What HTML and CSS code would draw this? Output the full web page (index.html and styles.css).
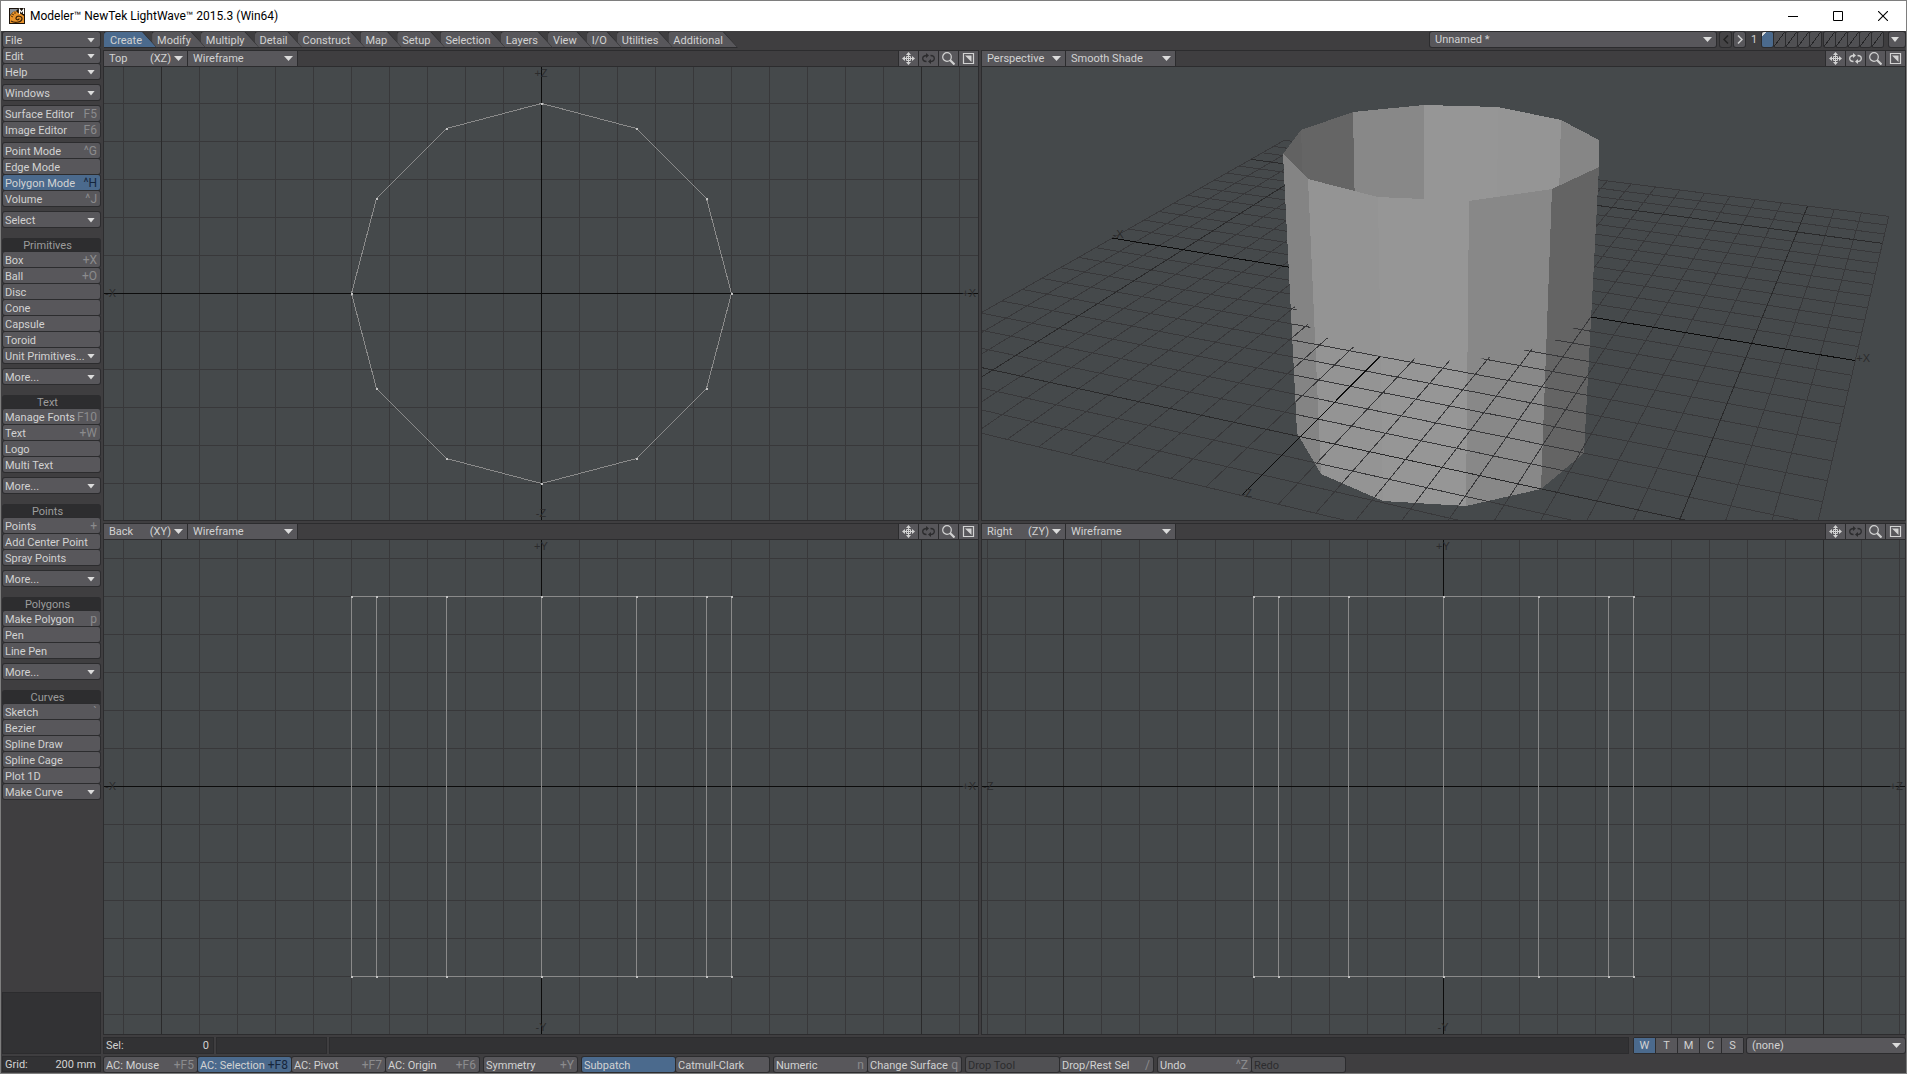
FILE: index.html
```html
<!DOCTYPE html>
<html lang="en">
<head>
<meta charset="utf-8">
<title>Modeler™ NewTek LightWave™ 2015.3 (Win64)</title>
<link rel="stylesheet" href="styles.css">
</head>
<body>
<svg class="defs" aria-hidden="true">
  <symbol id="i-move" viewBox="0 0 13 13"><path d="M6.500 2v9M2 6.500h9M4.500 4.500h4v4h-4z" fill="none" stroke="currentColor"/><path d="M6.500 0L9 3H4zM6.500 13L4 10h5zM0 6.500L3 4v5zM13 6.500L10 9V4z" fill="currentColor"/></symbol>
  <symbol id="i-rotate" viewBox="0 0 13 13"><path d="M4.500 9.500C2 9.500 .7 8 .7 6.500S2 3.500 5 3.500M8.500 3.500c2.500 0 3.800 1.500 3.800 3S11 9.500 8 9.500" fill="none" stroke="currentColor" stroke-width="1.300"/><path d="M4 1l3 2.500L4 6zM9 7L6 9.500 9 12z" fill="currentColor"/></symbol>
  <symbol id="i-zoom" viewBox="0 0 13 13"><circle cx="5" cy="5" r="4.300" fill="none" stroke="currentColor" stroke-width="1.200"/><path d="M8 8l4.500 4.500" stroke="currentColor" stroke-width="2.200"/></symbol>
  <symbol id="i-max" viewBox="0 0 13 13"><path d="M1.500 1.500h10v10h-10z" fill="none" stroke="currentColor" stroke-width="1.200"/><path d="M3 3.500h6.500v6.500z" fill="currentColor"/></symbol>
</svg>
<div class="window">
  <header class="titlebar">
    <svg class="app-icon" viewBox="0 0 16 16" aria-hidden="true">
      <rect width="16" height="16" fill="#1a120a"/>
      <path d="M1 1h8l-2 2-3 1-3 3z" fill="#8a8f94"/>
      <path d="M1 8l3-4 3-1 2 2 3 1 3 2v7H1z" fill="#e8922a"/>
      <path d="M2 13c3 2 10 2 11-2 .5-3-5-4-6-1-.5 2 3 2.500 3 .5" fill="none" stroke="#3a2208" stroke-width="1.200"/>
      <path d="M2 8l2 1M3 6l2 1M6 4l0 2" stroke="#5a3208"/>
      <path d="M10.500 6V1.500l2 2.500 2-2.500V6" fill="none" stroke="#fff" stroke-width="1.200"/>
    </svg>
    <h1 class="title">Modeler™ NewTek LightWave™ 2015.3 (Win64)</h1>
    <div class="caption">
      <button aria-label="Minimize"><svg viewBox="0 0 10 10"><path d="M0 5.500h10" stroke="#000"/></svg></button>
      <button aria-label="Maximize"><svg viewBox="0 0 10 10"><path d="M.5.5h9v9h-9z" fill="none" stroke="#000"/></svg></button>
      <button aria-label="Close"><svg viewBox="0 0 10 10"><path d="M0 0l10 10M10 0L0 10" stroke="#000" stroke-width="1.100"/></svg></button>
    </div>
  </header>

  <div class="workspace">
    <nav class="sidebar">
      <div class="group"><button class="btn menu">File</button><button class="btn menu">Edit</button><button class="btn menu">Help</button></div>
      <div class="group"><button class="btn menu">Windows</button></div>
      <div class="group"><button class="btn">Surface Editor<kbd>F5</kbd></button><button class="btn">Image Editor<kbd>F6</kbd></button></div>
      <div class="group"><button class="btn">Point Mode<kbd>^G</kbd></button><button class="btn">Edge Mode</button><button class="btn on">Polygon Mode<kbd>^H</kbd></button><button class="btn">Volume<kbd>^J</kbd></button></div>
      <div class="group"><button class="btn menu">Select</button></div>

      <h2 class="heading">Primitives</h2>
      <div class="group"><button class="btn">Box<kbd>+X</kbd></button><button class="btn">Ball<kbd>+O</kbd></button><button class="btn">Disc</button><button class="btn">Cone</button><button class="btn">Capsule</button><button class="btn">Toroid</button><button class="btn menu">Unit Primitives...</button></div>
      <div class="group"><button class="btn menu">More...</button></div>

      <h2 class="heading">Text</h2>
      <div class="group"><button class="btn">Manage Fonts<kbd>F10</kbd></button><button class="btn">Text<kbd>+W</kbd></button><button class="btn">Logo</button><button class="btn">Multi Text</button></div>
      <div class="group"><button class="btn menu">More...</button></div>

      <h2 class="heading">Points</h2>
      <div class="group"><button class="btn">Points<kbd>+</kbd></button><button class="btn">Add Center Point</button><button class="btn">Spray Points</button></div>
      <div class="group"><button class="btn menu">More...</button></div>

      <h2 class="heading">Polygons</h2>
      <div class="group"><button class="btn">Make Polygon<kbd>p</kbd></button><button class="btn">Pen</button><button class="btn">Line Pen</button></div>
      <div class="group"><button class="btn menu">More...</button></div>

      <h2 class="heading">Curves</h2>
      <div class="group"><button class="btn">Sketch<kbd>`</kbd></button><button class="btn">Bezier</button><button class="btn">Spline Draw</button><button class="btn">Spline Cage</button><button class="btn">Plot 1D</button><button class="btn menu">Make Curve</button></div>

      <div class="info"></div>
      <div class="readout grid-size"><span>Grid:</span><span>200 mm</span></div>
    </nav>

    <main class="main">
      <div class="topbar">
        <div class="tabs">
          <button class="tab on">Create</button><button class="tab">Modify</button><button class="tab">Multiply</button><button class="tab">Detail</button><button class="tab">Construct</button><button class="tab">Map</button><button class="tab">Setup</button><button class="tab">Selection</button><button class="tab">Layers</button><button class="tab">View</button><button class="tab">I/O</button><button class="tab">Utilities</button><button class="tab">Additional</button>
        </div>
        <div class="layers">
          <label class="drop object"><select aria-label="Object"><option>Unnamed *</option></select></label>
          <button class="step" aria-label="Previous layer set" disabled><svg viewBox="0 0 6 9"><path d="M5 .5l-4 4 4 4" fill="none" stroke="currentColor" stroke-width="1.500"/></svg></button>
          <button class="step" aria-label="Next layer set"><svg viewBox="0 0 6 9"><path d="M1 .5l4 4-4 4" fill="none" stroke="currentColor" stroke-width="1.500"/></svg></button>
          <span class="set">1</span>
          <div class="bank"><button class="layer on" aria-label="Layer 1"></button><button class="layer" aria-label="Layer 2"></button><button class="layer" aria-label="Layer 3"></button><button class="layer" aria-label="Layer 4"></button><button class="layer" aria-label="Layer 5"></button></div>
          <div class="bank"><button class="layer" aria-label="Layer 6"></button><button class="layer" aria-label="Layer 7"></button><button class="layer" aria-label="Layer 8"></button><button class="layer" aria-label="Layer 9"></button><button class="layer" aria-label="Layer 10"></button></div>
          <button class="btn menu more" aria-label="Layer menu"></button>
        </div>
      </div>

      <div class="views">
        <section class="view">
          <div class="viewbar">
            <label class="drop axis"><select aria-label="View"><option>Top</option></select><span>(XZ)</span></label>
            <label class="drop style"><select aria-label="Render style"><option>Wireframe</option></select></label>
            <div class="tools"><button aria-label="Move"><svg><use href="#i-move"/></svg></button><button aria-label="Rotate" disabled><svg><use href="#i-rotate"/></svg></button><button aria-label="Zoom"><svg><use href="#i-zoom"/></svg></button><button aria-label="Maximize view"><svg><use href="#i-max"/></svg></button></div>
          </div>
          <svg class="canvas" data-kind="top" data-h="X" data-v="Z"></svg>
        </section>
        <section class="view">
          <div class="viewbar">
            <label class="drop axis"><select aria-label="View"><option>Perspective</option></select></label>
            <label class="drop style"><select aria-label="Render style"><option>Smooth Shade</option></select></label>
            <div class="tools"><button aria-label="Move"><svg><use href="#i-move"/></svg></button><button aria-label="Rotate"><svg><use href="#i-rotate"/></svg></button><button aria-label="Zoom"><svg><use href="#i-zoom"/></svg></button><button aria-label="Maximize view"><svg><use href="#i-max"/></svg></button></div>
          </div>
          <svg class="canvas" data-kind="perspective"></svg>
        </section>
        <section class="view">
          <div class="viewbar">
            <label class="drop axis"><select aria-label="View"><option>Back</option></select><span>(XY)</span></label>
            <label class="drop style"><select aria-label="Render style"><option>Wireframe</option></select></label>
            <div class="tools"><button aria-label="Move"><svg><use href="#i-move"/></svg></button><button aria-label="Rotate" disabled><svg><use href="#i-rotate"/></svg></button><button aria-label="Zoom"><svg><use href="#i-zoom"/></svg></button><button aria-label="Maximize view"><svg><use href="#i-max"/></svg></button></div>
          </div>
          <svg class="canvas" data-kind="side" data-h="X" data-v="Y"></svg>
        </section>
        <section class="view">
          <div class="viewbar">
            <label class="drop axis"><select aria-label="View"><option>Right</option></select><span>(ZY)</span></label>
            <label class="drop style"><select aria-label="Render style"><option>Wireframe</option></select></label>
            <div class="tools"><button aria-label="Move"><svg><use href="#i-move"/></svg></button><button aria-label="Rotate" disabled><svg><use href="#i-rotate"/></svg></button><button aria-label="Zoom"><svg><use href="#i-zoom"/></svg></button><button aria-label="Maximize view"><svg><use href="#i-max"/></svg></button></div>
          </div>
          <svg class="canvas" data-kind="side" data-h="Z" data-v="Y"></svg>
        </section>
      </div>

      <div class="status">
        <div class="readout count"><span>Sel:</span><span>0</span></div>
        <div class="readout count"></div>
        <div class="readout message"></div>
        <div class="maps"><button class="on">W</button><button>T</button><button>M</button><button>C</button><button>S</button></div>
        <label class="drop vmap"><select aria-label="Vertex map"><option>(none)</option></select></label>
      </div>

      <div class="actions">
        <div><button class="btn">AC: Mouse<kbd>+F5</kbd></button><button class="btn on">AC: Selection<kbd>+F8</kbd></button><button class="btn">AC: Pivot<kbd>+F7</kbd></button><button class="btn">AC: Origin<kbd>+F6</kbd></button></div>
        <div><button class="btn">Symmetry<kbd>+Y</kbd></button></div>
        <div><button class="btn on">Subpatch</button><button class="btn">Catmull-Clark</button></div>
        <div><button class="btn">Numeric<kbd>n</kbd></button><button class="btn">Change Surface<kbd>q</kbd></button></div>
        <div><button class="btn" disabled>Drop Tool</button><button class="btn">Drop/Rest Sel<kbd>/</kbd></button></div>
        <div><button class="btn">Undo<kbd>^Z</kbd></button><button class="btn" disabled>Redo</button></div>
      </div>
    </main>
  </div>
</div>
<script src="views.js"></script>
</body>
</html>
```
FILE: styles.css
```css
:root {
  --panel: #3f3e40;
  --face: #58575b;
  --edge: #2c2c2e;
  --well: #323234;
  --text: #d2d2d2;
  --dim: #8b8b8d;
  --accent: #4b6a8d;
}

* { box-sizing: border-box; }

body {
  margin: 0;
  font: 11px/15px Roboto, "Liberation Sans", sans-serif;
  color: var(--text);
  background: var(--panel);
}

button, select {
  margin: 0;
  padding: 0;
  border: 0;
  border-radius: 0;
  font: inherit;
  color: inherit;
  background: var(--face);
}

.defs { display: none; }

.window {
  display: flex;
  flex-direction: column;
  min-height: 100vh;
  border: 1px solid #7e7e7e;
  background: var(--panel);
}

/* Title bar */
.titlebar {
  display: flex;
  align-items: center;
  height: 30px;
  padding: 0 1px 0 8px;
  background: #fff;
  color: #000;
}
.app-icon { width: 16px; height: 16px; }
.title {
  flex: 1;
  margin: 0 0 0 5px;
  font: 12px/16px Roboto, sans-serif;
}
.caption { display: flex; }
.caption button {
  display: grid;
  place-items: center;
  width: 45px;
  height: 28px;
  background: none;
}
.caption svg { width: 10px; height: 10px; }

.workspace {
  flex: 1;
  display: grid;
  grid-template-columns: 102px minmax(0, 1fr);
}

/* Buttons */
.btn {
  display: flex;
  justify-content: space-between;
  align-items: center;
  width: 100%;
  height: 15px;
  margin-bottom: 1px;
  padding: 1px 3px 0 2px;
  border-radius: 2px;
  box-shadow: 0 0 0 1px var(--edge);
  white-space: nowrap;
  text-align: left;
}
.btn kbd { font: inherit; font-size: 12px; color: var(--dim); }
.btn.on { background: var(--accent); }
.btn.on kbd { color: #16263c; }
.btn:disabled { color: #2c2c2e; background: #505053; }
.btn.menu::after, .drop::after {
  content: "";
  flex: none;
  width: 8px;
  height: 5px;
  margin-right: 2px;
  background: #dcdcdc;
  clip-path: polygon(0 0, 100% 0, 50% 100%);
}

/* Tool column */
.sidebar {
  display: flex;
  flex-direction: column;
  padding: 1px 2px 1px 1px;
}
.group { padding: 0 1px; margin-bottom: 5px; }
.heading {
  height: 14px;
  margin: 5px 0 0;
  padding-right: 8px;
  border-radius: 3px 3px 0 0;
  background: #2d2d2f;
  color: #9c9c9c;
  font: inherit;
  text-align: center;
}
.info {
  height: 62px;
  margin: auto 0 2px;
  background: var(--well);
  border: 1px solid var(--edge);
}
.readout {
  display: flex;
  justify-content: space-between;
  padding: 0 4px 0 2px;
  background: var(--well);
  border: 1px solid var(--edge);
}
.grid-size { height: 16px; }

/* Tabs and layer bank */
.main { display: flex; flex-direction: column; padding-bottom: 1px; }
.topbar {
  display: flex;
  justify-content: space-between;
  height: 19px;
  padding-top: 1px;
}
.tabs { display: flex; height: 16px; padding-left: 1px; }
.tab {
  position: relative;
  isolation: isolate;
  padding: 0 15px 0 6px;
  margin-right: -5px;
  background: var(--edge);
  clip-path: polygon(0 0, calc(100% - 14px) 0, 100% 100%, 0 100%);
}
.tab::before {
  content: "";
  position: absolute;
  inset: 0 1px 1px 0;
  z-index: -1;
  border-top-left-radius: 3px;
  background: var(--face);
  clip-path: polygon(0 0, calc(100% - 14px) 0, 100% 100%, 0 100%);
}
.tab + .tab {
  padding-left: 5px;
  clip-path: polygon(0 0, calc(100% - 14px) 0, 100% 100%, 5px 100%, 0 10px);
}
.tab.on::before { background: var(--accent); }

.layers { display: flex; }
.drop {
  display: flex;
  align-items: center;
  height: 15px;
  padding: 0 4px 0 5px;
  background: var(--face);
  white-space: nowrap;
}
.drop select {
  flex: 1;
  min-width: 0;
  appearance: none;
  background: none;
  outline: 0;
}
.drop::after { width: 9px; height: 5px; margin: 0; }
.drop span { margin-right: 3px; }
.object {
  width: 286px;
  margin-right: 4px;
  border-radius: 2px;
  box-shadow: 0 0 0 1px var(--edge);
}
.step {
  display: grid;
  place-items: center;
  width: 11px;
  height: 15px;
  margin-right: 3px;
  border-radius: 2px;
  box-shadow: 0 0 0 1px var(--edge);
}
.step:disabled { color: #222; background: #454446; }
.step svg { width: 6px; height: 9px; }
.set { width: 14px; padding-right: 2px; text-align: center; }
.bank { display: flex; gap: 1px; margin-right: 3px; }
.layer {
  width: 11px;
  height: 15px;
  border-radius: 2px;
  box-shadow: 0 0 0 1px var(--edge);
  background: linear-gradient(to top left, #505053 49%, #242426 49%, #242426 54%, #505053 54%);
}
.layer.on { background: linear-gradient(135deg, #dcdcdc 3px, var(--accent) 3px); }
.more { width: 16px; margin: 0 1px 0 3px; padding: 0 2px; }

/* Viewports */
.views {
  flex: 1;
  display: grid;
  grid-template-columns: minmax(0, 876fr) minmax(0, 925fr);
  grid-template-rows: minmax(0, 471fr) minmax(0, 512fr);
  gap: 2px;
  min-height: 600px;
}
.view {
  display: flex;
  flex-direction: column;
  border: 1px solid var(--edge);
}
.viewbar {
  display: flex;
  gap: 1px;
  height: 16px;
  border-bottom: 1px solid var(--edge);
}
.viewbar .drop { box-shadow: 1px 0 0 var(--edge); }
.axis { width: 83px; }
.style { width: 109px; }
.tools { display: flex; gap: 1px; margin-left: auto; }
.tools button {
  display: grid;
  place-items: center;
  width: 19px;
  height: 15px;
  box-shadow: -1px 0 0 var(--edge);
}
.tools svg { width: 13px; height: 13px; }
.tools button:disabled { color: #2c2c2e; }
.canvas {
  flex: 1;
  display: block;
  width: 100%;
  min-height: 0;
  background: #45494b;
  font: 11px "Liberation Sans", sans-serif;
}
.canvas text { fill: #2b2b2c; }
.minor { stroke: #38383a; }
.major { stroke: #2a2a2b; }
.origin { stroke: #0c0c0c; }
.wire { stroke: #8a8a8a; fill: none; }
.dot { fill: #c4c4c4; }
.crisp { shape-rendering: crispEdges; }

/* Status and action rows */
.status {
  display: flex;
  height: 17px;
  margin: 2px 0;
}
.count { width: 111px; margin-right: 2px; }
.message { flex: 1; margin-right: 4px; }
.maps {
  display: flex;
  gap: 1px;
  margin-right: 3px;
  border: 1px solid var(--edge);
  border-radius: 2px;
  background: var(--edge);
}
.maps button { width: 21px; height: 15px; }
.maps .on { background: var(--accent); }
.vmap {
  width: 158px;
  margin: 1px 1px 0 0;
  border-radius: 2px;
  box-shadow: 0 0 0 1px var(--edge);
}
.actions { display: flex; gap: 5px; height: 16px; padding: 1px 0 0 1px; }
.actions div { display: flex; gap: 1px; }
.actions .btn { width: 93px; }
```
FILE: views.js
```js
const CELL = 38;
const NS = 'http://www.w3.org/2000/svg';

function add(parent, tag, attrs, text) {
  const el = document.createElementNS(NS, tag);
  for (const key in attrs) el.setAttribute(key, attrs[key]);
  if (text) el.textContent = text;
  parent.appendChild(el);
  return el;
}

const line = (g, x1, y1, x2, y2, cls) => add(g, 'line', { x1, y1, x2, y2, class: cls });
const lineClass = k => (k === 0 ? 'origin' : k % 10 === 0 ? 'major' : 'minor');

// Twelve-sided disc, radius five cells
const ring = Array.from({ length: 12 }, (_, i) => {
  const a = i * Math.PI / 6;
  return [5 * Math.cos(a), 5 * Math.sin(a)];
});

function drawOrtho(svg, w, h) {
  const cx = Math.floor(w / 2), cy = Math.floor((h - 1) / 2);
  const g = add(svg, 'g', { transform: `translate(${cx + 0.5} ${cy + 0.5})`, class: 'crisp' });
  const nx = Math.ceil(cx / CELL), ny = Math.ceil(cy / CELL);
  for (const pass of ['minor', 'major', 'origin']) {
    for (let i = -nx; i <= nx; i++) if (lineClass(i) === pass) line(g, i * CELL, -h, i * CELL, h, pass);
    for (let j = -ny; j <= ny; j++) if (lineClass(j) === pass) line(g, -w, j * CELL, w, j * CELL, pass);
  }
  const { h: hAxis, v: vAxis, kind } = svg.dataset;
  add(svg, 'text', { x: 1, y: cy + 4 }, '-' + hAxis);
  add(svg, 'text', { x: w - 2, y: cy + 4, 'text-anchor': 'end' }, '+' + hAxis);
  add(svg, 'text', { x: cx, y: 10, 'text-anchor': 'middle' }, '+' + vAxis);
  add(svg, 'text', { x: cx, y: h - 3, 'text-anchor': 'middle' }, '-' + vAxis);

  const dots = [];
  if (kind === 'top') {
    const pts = ring.map(p => p.map(c => Math.round(c * CELL)));
    add(g, 'polygon', { points: pts.join(' '), class: 'wire' });
    dots.push(...pts);
  } else {
    const r = 5 * CELL;
    add(g, 'rect', { x: -r, y: -r, width: 2 * r, height: 2 * r, class: 'wire' });
    for (const [c] of ring.slice(0, 7)) {
      const x = Math.round(c * CELL);
      line(g, x, -r, x, r, 'wire');
      dots.push([x, -r], [x, r]);
    }
  }
  for (const [x, y] of dots) add(g, 'rect', { x: x - 1, y: y - 1, width: 2, height: 2, class: 'dot' });
}

// Projection of the ground plane, solved from four known grid points
function solvePlane(pairs) {
  const m = [];
  for (const [[u, v], [x, y]] of pairs) {
    m.push([u, v, 1, 0, 0, 0, -u * x, -v * x, x]);
    m.push([0, 0, 0, u, v, 1, -u * y, -v * y, y]);
  }
  for (let i = 0; i < 8; i++) {
    let p = i;
    for (let r = i + 1; r < 8; r++) if (Math.abs(m[r][i]) > Math.abs(m[p][i])) p = r;
    [m[i], m[p]] = [m[p], m[i]];
    for (let r = 0; r < 8; r++) {
      if (r === i) continue;
      const f = m[r][i] / m[i][i];
      for (let c = i; c < 9; c++) m[r][c] -= f * m[i][c];
    }
  }
  const k = m.map((row, i) => row[8] / row[i]);
  return (u, v) => {
    const d = k[6] * u + k[7] * v + 1;
    return [(k[0] * u + k[1] * v + k[2]) / d, (k[3] * u + k[4] * v + k[5]) / d];
  };
}

const project = solvePlane([
  [[-13, -13], [-158.7, -152.7]],
  [[13, -13], [445.7, -76.7]],
  [[10, 10], [237, 226]],
  [[-10, 10], [-450.3, 77]],
]);

const outerFaces = [
  ['#848484', '-160,-139 -135,-114 -122,181 -146,140'],
  ['#949494', '-135,-114 -65,-96 -60,208 -122,181'],
  ['#969696', '-65,-96 26,-92 23,213 -60,208'],
  ['#888888', '26,-92 109,-104 98,196 23,213'],
  ['#646464', '109,-104 156,-126 141,160 98,196'],
];
const innerFaces = [
  ['#626262', '-160,-139 -142,-163 -140,-110 -135,-110'],
  ['#656565', '-142,-163 -90,-181 -88,-90 -140,-110'],
  ['#888888', '-90,-181 -19,-188 -19,-80 -88,-80'],
  ['#969696', '-19,-188 55,-186 54,-80 -19,-80'],
  ['#959595', '55,-186 118,-173 116,-95 54,-80'],
  ['#868686', '118,-173 156,-153 156,-126 116,-95'],
];
const silhouette = '-160,-139 -142,-163 156,-153 156,-126 141,160 98,196 23,213 -60,208 -122,181 -146,140';

function drawGround(g) {
  for (const pass of ['minor', 'major', 'origin']) {
    for (let k = -13; k <= 13; k++) {
      if (lineClass(k) !== pass) continue;
      line(g, ...project(k, -13), ...project(k, 13), pass);
      line(g, ...project(-13, k), ...project(13, k), pass);
    }
  }
}

function drawPerspective(svg, w, h) {
  const cx = Math.floor(w / 2), cy = Math.floor((h - 1) / 2);
  const defs = add(svg, 'defs', {});
  add(add(defs, 'clipPath', { id: 'solid' }), 'polygon', { points: silhouette });
  // Ground in front of the solid: below the near half of the ring
  const near = [[-4.330, 2.500], [-2.500, 4.330], [0, 5], [2.500, 4.330], [4.330, 2.500], [5, 0]];
  const edge = near.map(p => project(...p));
  const region = [[-200, edge[0][1]], ...edge, [200, edge[5][1]], [200, 240], [-200, 240]];
  add(add(defs, 'clipPath', { id: 'near' }), 'polygon', { points: region.join(' ') });

  const g = add(svg, 'g', { transform: `translate(${cx} ${cy})`, class: 'crisp' });
  drawGround(g);
  for (const [fill, points] of [...innerFaces, ...outerFaces]) add(g, 'polygon', { points, fill });
  const front = add(add(g, 'g', { 'clip-path': 'url(#solid)' }), 'g', { 'clip-path': 'url(#near)' });
  drawGround(front);

  const label = (u, v, dx, dy, text) => {
    const [x, y] = project(u, v);
    add(g, 'text', { x: x + dx, y: y + dy }, text);
  };
  label(-13, 0, 0, 0, '-X');
  label(13, 0, 1, 1, '+X');
  label(0, 13, 0, 1, '-Z');
}

function drawAll() {
  for (const svg of document.querySelectorAll('.canvas')) {
    svg.replaceChildren();
    const { width, height } = svg.getBoundingClientRect();
    if (svg.dataset.kind === 'perspective') drawPerspective(svg, width, height);
    else drawOrtho(svg, width, height);
  }
}

drawAll();
addEventListener('resize', drawAll);
```
